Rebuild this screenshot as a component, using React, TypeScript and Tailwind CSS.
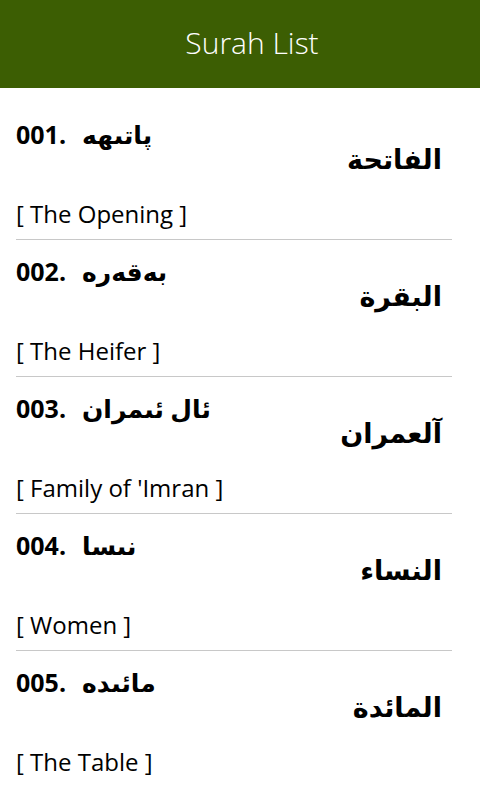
const surahs = [
  { no: '001', ku: 'پاتىهه', ar: 'الفاتحة', en: 'The Opening' },
  { no: '002', ku: 'بەقەرە', ar: 'البقرة', en: 'The Heifer' },
  { no: '003', ku: 'ئال ئىمران', ar: 'آلعمران', en: "Family of 'Imran" },
  { no: '004', ku: 'نىسا', ar: 'النساء', en: 'Women' },
  { no: '005', ku: 'مائىده', ar: 'المائدة', en: 'The Table' },
]

function App() {
  return (
    <div
      className="min-h-screen bg-white text-black"
      style={{ fontFamily: '"Open Sans", "DejaVu Sans", sans-serif' }}
    >
      <header className="h-[88px] bg-[#3c5e03] flex items-center justify-center pl-6 pb-1">
        <h1 className="text-[30px] font-light text-white">Surah List</h1>
      </header>

      <ul className="pt-[15px] px-4 pr-7">
        {surahs.map((s, i) => (
          <li
            key={s.no}
            className={`flex h-[137px] pt-4 ${i < surahs.length - 1 ? 'border-b border-[#c8c8c8]' : ''}`}
          >
            <div className="flex-1 flex flex-col">
              <div className="h-8 flex items-center text-[25px] font-bold whitespace-nowrap">
                <span>{s.no}.</span>
                <span className="ml-[16px]" dir="rtl">{s.ku}</span>
              </div>
              <div className="mt-12 h-[30px] flex items-center text-[24px]">[ {s.en} ]</div>
            </div>
            <div className="pt-[20px] pr-[10px]">
              <div className="h-10 flex items-center text-[27px] font-bold" dir="rtl">{s.ar}</div>
            </div>
          </li>
        ))}
      </ul>
    </div>
  )
}

export default App
